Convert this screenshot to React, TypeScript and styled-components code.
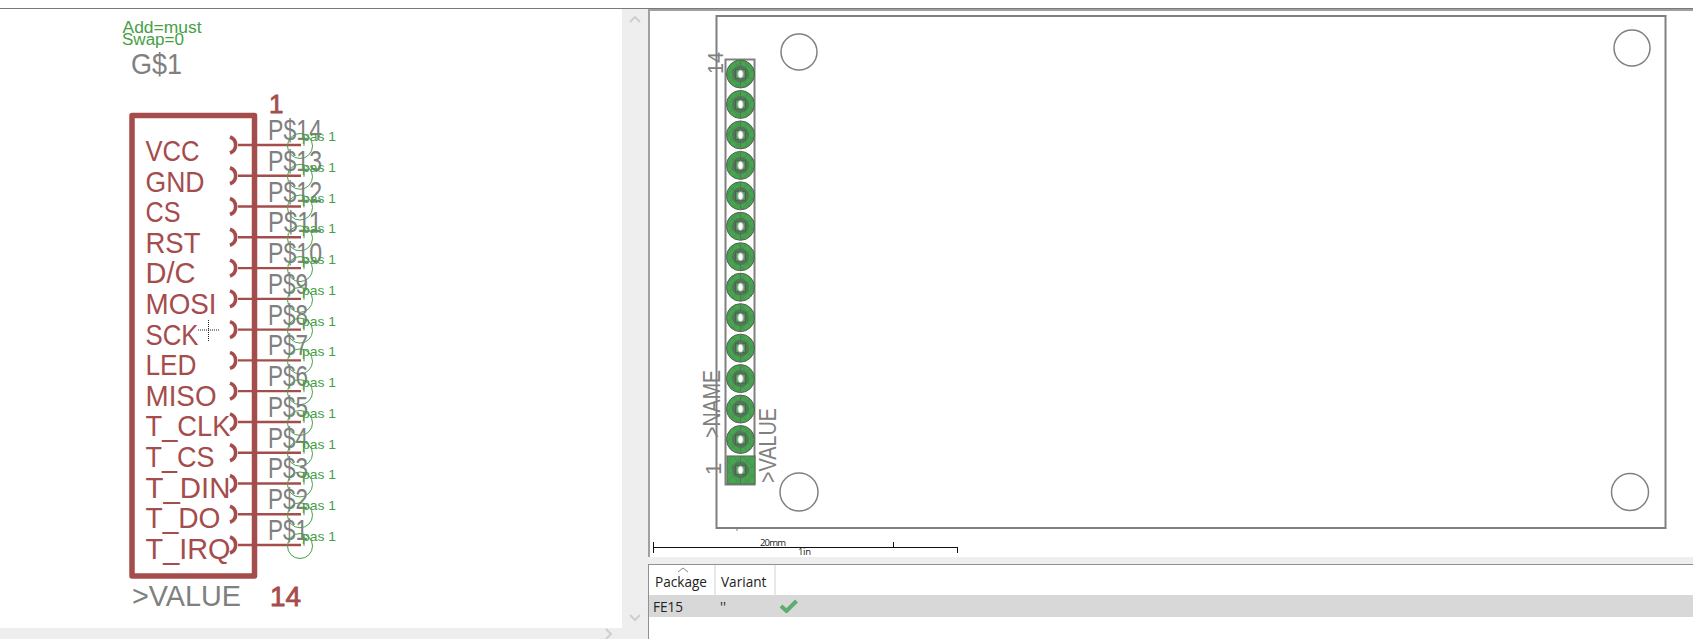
import React from "react";
import styled, { createGlobalStyle } from "styled-components";

const GlobalStyle = createGlobalStyle`
  html, body {
    margin: 0;
    padding: 0;
    background: #ffffff;
    overflow: hidden;
  }
`;

const RED = "#a54c4c";
const GRAY = "#808080";
const GREEN = "#45a045";

const Page = styled.div`
  width: 1693px;
  height: 639px;
  padding-top: 8px;
  box-sizing: border-box;
  background: #fff;
  font-family: "Open Sans", "Liberation Sans", sans-serif;
`;
const Main = styled.div`
  display: flex;
  height: 631px;
  border-top: 1px solid #7a7a7a;
`;
const LeftPane = styled.div`
  width: 648px;
  display: flex;
  flex-direction: column;
`;
const LeftRow = styled.div`
  display: flex;
  height: 619px;
`;
const Canvas = styled.svg`
  display: block;
  flex: 1;
  background: #fff;
`;
const VScroll = styled.div`
  width: 26px;
  background: #eeeeee;
  display: flex;
  flex-direction: column;
  justify-content: space-between;
  align-items: center;
  padding: 6px 0 6px;
  box-sizing: border-box;
`;
const HScroll = styled.div`
  height: 11px;
  background: #eeeeee;
  display: flex;
  justify-content: flex-end;
  padding-right: 32px;
`;
const RightPane = styled.div`
  flex: 1;
  display: flex;
  flex-direction: column;
  background: #eeeeee;
`;
const BoardFrame = styled.div`
  height: 548px;
  box-sizing: border-box;
  border-top: 2px solid #a0a0a0;
  border-left: 2px solid #a0a0a0;
  display: flex;
`;
const TablePanel = styled.div`
  margin-top: 7px;
  flex: 1;
  background: #fff;
  border-top: 1px solid #909090;
  border-left: 1px solid #909090;
`;
const HeaderRow = styled.div`
  display: flex;
  height: 30px;
  position: relative;
`;
const HeaderCell = styled.div<{ $w: number; $pad: number }>`
  width: ${(p) => p.$w}px;
  box-sizing: border-box;
  border-right: 2px solid #e8e8e8;
  padding: 7px 0 0 ${(p) => p.$pad}px;
  font-size: 13.6px;
  line-height: 20px;
  color: #222;
`;
const SortCaret = styled.svg`
  position: absolute;
  left: 28px;
  top: 2px;
`;
const DataRow = styled.div`
  display: flex;
  align-items: center;
  height: 22px;
  background: #d8d8d8;
`;
const DataCell = styled.div<{ $w: number }>`
  width: ${(p) => p.$w}px;
  box-sizing: border-box;
  padding-left: 4px;
  font-size: 13.6px;
  color: #222;
`;
const CheckIcon = styled.svg`
  margin-left: 3px;
`;
const Label = styled.text<{ $color: string; $size: number; $heavy?: boolean }>`
  font-family: "Liberation Sans", Arial, sans-serif;
  font-size: ${(p) => p.$size}px;
  fill: ${(p) => p.$color};
  stroke: ${(p) => (p.$heavy ? p.$color : "none")};
  stroke-width: ${(p) => (p.$heavy ? 0.8 : 0)}px;
`;
const DimLabel = styled.text`
  font-family: "Open Sans", sans-serif;
  font-size: 9.5px;
  fill: #222;
`;

const pinNames: [string, number][] = [
  ["VCC", 54],
  ["GND", 59],
  ["CS", 35],
  ["RST", 55],
  ["D/C", 50],
  ["MOSI", 71],
  ["SCK", 53],
  ["LED", 51],
  ["MISO", 71],
  ["T_CLK", 85],
  ["T_CS", 69],
  ["T_DIN", 85],
  ["T_DO", 75],
  ["T_IRQ", 85],
];

const pinY = (i: number) => 145 + i * 30.77;
const padY = (i: number) => 74 + i * 30.46;

const Chevron = ({ dir }: { dir: "up" | "down" | "right" }) => {
  const d = dir === "up" ? "M1 7 L6 2 L11 7" : dir === "down" ? "M1 2 L6 7 L11 2" : "M2 1 L7 6 L2 11";
  return (
    <svg width={12} height={dir === "right" ? 12 : 9}>
      <path d={d} fill="none" stroke="#cfcfcf" strokeWidth={2} />
    </svg>
  );
};

const SchematicPin = ({ name, width, index }: { name: string; width: number; index: number }) => {
  const y = pinY(index);
  const pad = 14 - index;
  const nameY = 161 + index * 30.6;
  const padWidth = pad >= 10 ? 54 : 40;
  return (
    <g>
      <Label $color={RED} $size={30} x={145.5} y={nameY} textLength={width} lengthAdjust="spacingAndGlyphs">
        {name}
      </Label>
      <path d={`M230 ${y - 8} A8.5 8.5 0 0 1 230 ${y + 8}`} fill="none" stroke={RED} strokeWidth={3.6} />
      <line x1={238} y1={y} x2={301} y2={y} stroke={RED} strokeWidth={2.4} />
      <Label $color={GRAY} $size={30} x={268} y={y - 5} textLength={padWidth} lengthAdjust="spacingAndGlyphs">
        {`P$${pad}`}
      </Label>
      <circle cx={300} cy={y + 1} r={12.5} fill="none" stroke={GREEN} strokeWidth={1} />
      <line x1={304} y1={y - 9} x2={304} y2={y + 1} stroke={GREEN} strokeWidth={1} />
      <Label $color={GREEN} $size={13} x={302} y={y - 4} textLength={34} lengthAdjust="spacingAndGlyphs">
        pas 1
      </Label>
    </g>
  );
};

const Schematic = () => (
  <Canvas viewBox="0 9 622 619" width={622} height={619}>
    <Label $color={GREEN} $size={16} x={122.5} y={33} textLength={79} lengthAdjust="spacingAndGlyphs">
      Add=must
    </Label>
    <Label $color={GREEN} $size={16} x={122} y={45} textLength={62} lengthAdjust="spacingAndGlyphs">
      Swap=0
    </Label>
    <Label $color={GRAY} $size={30} x={131} y={74} textLength={51} lengthAdjust="spacingAndGlyphs">
      G$1
    </Label>
    <Label $color={RED} $size={26} $heavy x={269} y={113}>
      1
    </Label>
    <rect x={132} y={115.5} width={122.5} height={460.5} fill="none" stroke={RED} strokeWidth={5.5} strokeLinejoin="round" />
    {pinNames.map(([name, width], i) => (
      <SchematicPin key={name} name={name} width={width} index={i} />
    ))}
    <Label $color={GRAY} $size={30} x={132} y={606} textLength={109} lengthAdjust="spacingAndGlyphs">
      {">VALUE"}
    </Label>
    <Label $color={RED} $size={28} x={270} y={606} textLength={31} lengthAdjust="spacingAndGlyphs" $heavy>
      14
    </Label>
    <line x1={198} y1={330} x2={219} y2={330} stroke="#222" strokeWidth={1} strokeDasharray="1 1" />
    <line x1={208.5} y1={320} x2={208.5} y2={341} stroke="#222" strokeWidth={1} strokeDasharray="1 1" />
  </Canvas>
);

const Pad = ({ cy, square }: { cy: number; square?: boolean }) => (
  <g>
    {square ? (
      <rect x={727} y={cy - 14} width={28} height={28} fill="url(#padHatch)" stroke="#5a6a5a" strokeWidth={1} />
    ) : (
      <circle cx={740.5} cy={cy} r={14} fill="url(#padHatch)" stroke="#566056" strokeWidth={1} />
    )}
    <path d={`M740.5 ${cy - 13}V${cy + 13}`} stroke="#4e7a55" strokeWidth={1} />
    <circle cx={740.5} cy={cy} r={8.5} fill="#55705a" fillOpacity={0.85} />
    <rect x={735.5} y={cy - 4.5} width={10} height={9} fill="#46a04f" stroke="#4a644e" />
    <ellipse cx={740.5} cy={cy} rx={3.6} ry={4.6} fill="#9aa89a" />
    <ellipse cx={740.5} cy={cy} rx={2.2} ry={3.6} fill="#ffffff" />
  </g>
);

const Board = () => (
  <Canvas viewBox="650 11 1043 546" width={1043} height={546}>
    <defs>
      <pattern id="padHatch" width={7} height={7} patternUnits="userSpaceOnUse" patternTransform="rotate(45)">
        <rect width={7} height={7} fill="#45a64e" />
        <path d="M0 0H7M0 0V7" stroke="#4f7f58" strokeWidth={1} />
      </pattern>
    </defs>
    <rect x={716.5} y={16} width={949} height={512} fill="none" stroke={GRAY} strokeWidth={2} />
    <line x1={737} y1={528} x2={737} y2={531} stroke={GRAY} />
    <circle cx={799} cy={52} r={18} fill="none" stroke={GRAY} strokeWidth={1.5} />
    <circle cx={1632} cy={48} r={18} fill="none" stroke={GRAY} strokeWidth={1.5} />
    <circle cx={799} cy={492} r={19} fill="none" stroke={GRAY} strokeWidth={1.5} />
    <circle cx={1630} cy={492} r={18.5} fill="none" stroke={GRAY} strokeWidth={1.5} />
    <rect x={725.5} y={59.5} width={29} height={425} fill="#fff" stroke={GRAY} strokeWidth={2} />
    {Array.from({ length: 14 }, (_, i) => (
      <Pad key={i} cy={padY(i)} square={i === 13} />
    ))}
    <Label $color={GRAY} $size={22} transform="translate(723 74) rotate(-90)" textLength={22} lengthAdjust="spacingAndGlyphs">
      14
    </Label>
    <Label $color={GRAY} $size={22} transform="translate(721 475) rotate(-90)">
      1
    </Label>
    <Label $color={GRAY} $size={24} transform="translate(720 438) rotate(-90)" textLength={68} lengthAdjust="spacingAndGlyphs">
      {">NAME"}
    </Label>
    <Label $color={GRAY} $size={24} transform="translate(776 483) rotate(-90)" textLength={75} lengthAdjust="spacingAndGlyphs">
      {">VALUE"}
    </Label>
    <line x1={653} y1={547.5} x2={958} y2={547.5} stroke="#111" />
    <line x1={653.5} y1={542} x2={653.5} y2={553} stroke="#111" />
    <line x1={893.5} y1={542} x2={893.5} y2={548} stroke="#111" />
    <line x1={957.5} y1={547} x2={957.5} y2={553} stroke="#111" />
    <DimLabel x={760} y={546} textLength={26}>
      20mm
    </DimLabel>
    <DimLabel x={798} y={554.5} textLength={13}>
      1in
    </DimLabel>
  </Canvas>
);

const PartTable = () => (
  <TablePanel>
    <HeaderRow>
      <SortCaret width={12} height={6}>
        <path d="M1 5 L6 1 L11 5" fill="none" stroke="#888" />
      </SortCaret>
      <HeaderCell $w={67} $pad={6}>Package</HeaderCell>
      <HeaderCell $w={60} $pad={5}>Variant</HeaderCell>
    </HeaderRow>
    <DataRow>
      <DataCell $w={67}>FE15</DataCell>
      <DataCell $w={60}>''</DataCell>
      <CheckIcon width={20} height={14} viewBox="0 0 20 14">
        <path d="M2 7 L7.5 12 L17.5 2" fill="none" stroke="#5cad6e" strokeWidth={4} />
      </CheckIcon>
    </DataRow>
  </TablePanel>
);

const App = () => (
  <>
    <GlobalStyle />
    <Page>
      <Main>
        <LeftPane>
          <LeftRow>
            <Schematic />
            <VScroll>
              <Chevron dir="up" />
              <Chevron dir="down" />
            </VScroll>
          </LeftRow>
          <HScroll>
            <Chevron dir="right" />
          </HScroll>
        </LeftPane>
        <RightPane>
          <BoardFrame>
            <Board />
          </BoardFrame>
          <PartTable />
        </RightPane>
      </Main>
    </Page>
  </>
);

export default App;
